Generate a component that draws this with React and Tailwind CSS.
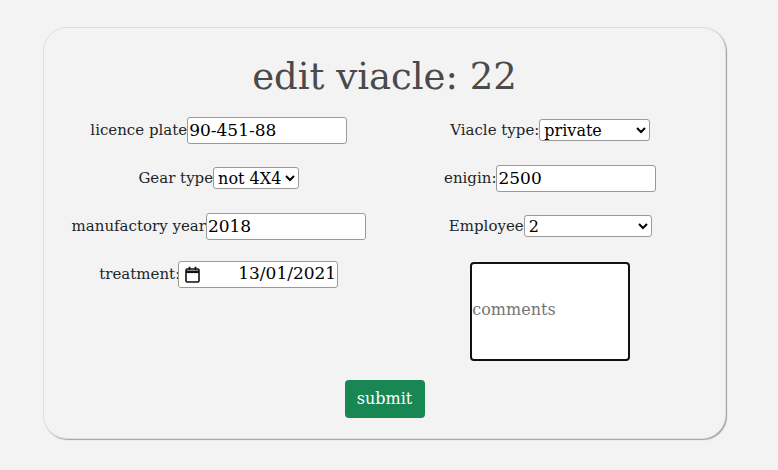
import React from "react";

const font = { fontFamily: '"DejaVu Serif", serif' };

function Row({ children }) {
  return <div className="flex h-[48px] items-center justify-center">{children}</div>;
}

const field =
  "h-[27px] w-[160px] rounded-[3px] border border-[#9a9a9a] bg-white px-[1px] text-[17px] text-black";
const pick =
  "h-[22px] rounded-[3px] border border-[#9a9a9a] bg-white text-[16px] text-black";

export default function App() {
  return (
    <div className="min-h-screen bg-[#f3f3f3] pt-[27px] text-[#212529]" style={font}>
      <form className="ml-[43px] flex h-[412px] w-[683px] flex-col rounded-[24px] border border-[#dedede] bg-[#f3f3f3] px-[9px] pt-[19px] shadow-[1px_1px_1px_#a0a0a0]">
        <h1 className="h-[59px] text-center text-[37px] leading-[59px] text-[#4a4a4a]">edit viacle: 22</h1>
        <div className="grid grid-cols-2">
          <div className="flex flex-col">
            <Row>
              <label className="text-[15px]">licence plate</label>
              <input defaultValue="90-451-88" className={field} style={font} />
            </Row>
            <Row>
              <label className="text-[15px]">Gear type</label>
              <select className={pick} style={font}>
                <option>not 4X4</option>
                <option>4X4</option>
              </select>
            </Row>
            <Row>
              <label className="text-[15px]">manufactory year</label>
              <input defaultValue="2018" className={field} style={font} />
            </Row>
            <Row>
              <label className="mr-[2px] text-[15px]">treatment:</label>
              <div className="-ml-[4px] flex h-[27px] w-[160px] items-center justify-between rounded-[3px] border border-[#9a9a9a] bg-white pl-[6px] pr-[1px] text-[17px] text-black">
                <svg width="15" height="17" viewBox="0 0 15 17" fill="none" stroke="#111" strokeWidth="1.6">
                  <rect x="1" y="3" width="13" height="13" rx="1.2" />
                  <path d="M1 5.8h13" strokeWidth="2.6" />
                  <path d="M4.5 0.8v3M10.5 0.8v3" strokeWidth="1.8" />
                </svg>
                <span>13/01/2021</span>
              </div>
            </Row>
          </div>
          <div className="flex flex-col items-center">
            <Row>
              <label className="text-[15px]">Viacle type:</label>
              <select className={`${pick} w-[111px]`} style={font}>
                <option>private</option>
                <option>commercial</option>
              </select>
            </Row>
            <Row>
              <label className="text-[15px]">enigin:</label>
              <input defaultValue="2500" className={field} style={font} />
            </Row>
            <Row>
              <label className="text-[15px]">Employee</label>
              <select className={`${pick} w-[128px]`} style={font}>
                <option>2</option>
                <option>1</option>
              </select>
            </Row>
            <textarea
              placeholder="comments"
              style={font}
              className="mt-[12px] h-[99px] w-[160px] resize-none rounded-[4px] border-2 border-[#111] bg-white pt-[34px] text-[16px] placeholder:text-[#757575]"
            />
          </div>
        </div>
        <div className="flex justify-center">
          <button
            type="button"
            className="mt-[19px] h-[38px] w-[80px] rounded-[4px] bg-[#198754] text-[16px] text-white"
          >
            submit
          </button>
        </div>
      </form>
    </div>
  );
}
